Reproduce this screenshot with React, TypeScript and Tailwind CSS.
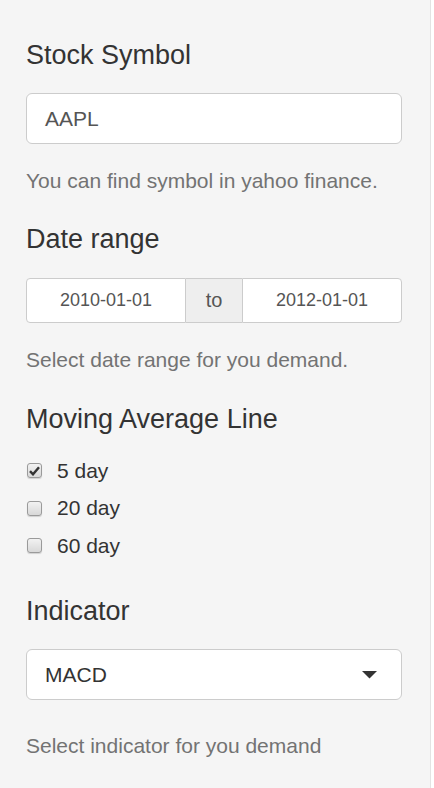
import React from 'react';

const font = { fontFamily: '"Liberation Sans", Arial, Helvetica, sans-serif' };

// Titre de section, même taille pour les quatre groupes
const Heading = ({ children, className = '' }: { children: React.ReactNode; className?: string }) => (
  <h4 className={`text-[27px] leading-[30px] font-normal text-[#333333] ${className}`}>{children}</h4>
);

const Help = ({ children, className = '' }: { children: React.ReactNode; className?: string }) => (
  <p className={`text-[21px] leading-[30px] text-[#737373] ${className}`}>{children}</p>
);

const Checkbox = ({ label, checked, className = '' }: { label: string; checked?: boolean; className?: string }) => (
  <label className={`flex items-center h-[30px] ${className}`}>
    <span className="relative w-[15px] h-[15px] ml-[1px] rounded-[3px] border border-[#9a9a9a] bg-gradient-to-b from-[#f2f2f2] to-[#d8d8d8] shadow-[0_1px_1px_rgba(0,0,0,0.15)] flex items-center justify-center">
      {checked && (
        <svg width="11" height="10" viewBox="0 0 11 10">
          <path d="M1 5.2 L4 8.3 L10 1.2" fill="none" stroke="#333333" strokeWidth="2.4" strokeLinejoin="miter" />
        </svg>
      )}
    </span>
    <span className="ml-[15px] text-[21px] text-[#333333]">{label}</span>
  </label>
);

export default function App() {
  const days = [
    { label: '5 day', checked: true },
    { label: '20 day', checked: false },
    { label: '60 day', checked: false },
  ];

  return (
    <div className="min-h-screen bg-white" style={font}>
      <div className="w-[431px] min-h-[788px] bg-[#f5f5f5] border-r border-[#e3e3e3] pl-[26px] pr-[28px] pt-[40px]">
        <Heading>Stock Symbol</Heading>
        <div className="mt-[23px] h-[51px] rounded-[6px] border border-[#cccccc] bg-white flex items-center px-[18px] text-[21px] text-[#555555]">
          AAPL
        </div>
        <Help className="mt-[22px]">You can find symbol in yahoo finance.</Help>

        <Heading className="mt-[28px]">Date range</Heading>
        <div className="mt-[23.5px] flex h-[45px] text-[18px] text-[#555555]">
          <div className="flex-1 flex items-center justify-center bg-white border border-[#cccccc] rounded-l-[4px]">
            2010-01-01
          </div>
          <div className="w-[56px] flex items-center justify-center bg-[#eeeeee] border-y border-[#cccccc] text-[20px]">
            to
          </div>
          <div className="flex-1 flex items-center justify-center bg-white border border-[#cccccc] rounded-r-[4px]">
            2012-01-01
          </div>
        </div>
        <Help className="mt-[22px]">Select date range for you demand.</Help>

        <Heading className="mt-[29px]">Moving Average Line</Heading>
        <div className="mt-[22px] flex flex-col gap-[7.5px]">
          {days.map((d) => (
            <Checkbox key={d.label} label={d.label} checked={d.checked} />
          ))}
        </div>

        <Heading className="mt-[35px]">Indicator</Heading>
        <div className="mt-[23.5px] h-[51px] rounded-[6px] border border-[#cccccc] bg-white flex items-center justify-between pl-[18px] pr-[24px] text-[21px] text-[#333333]">
          <span>MACD</span>
          <svg width="15" height="8" viewBox="0 0 15 8">
            <path d="M0 0 L15 0 L7.5 7.5 Z" fill="#333333" />
          </svg>
        </div>
        <Help className="mt-[31px]">Select indicator for you demand</Help>
      </div>
    </div>
  );
}
